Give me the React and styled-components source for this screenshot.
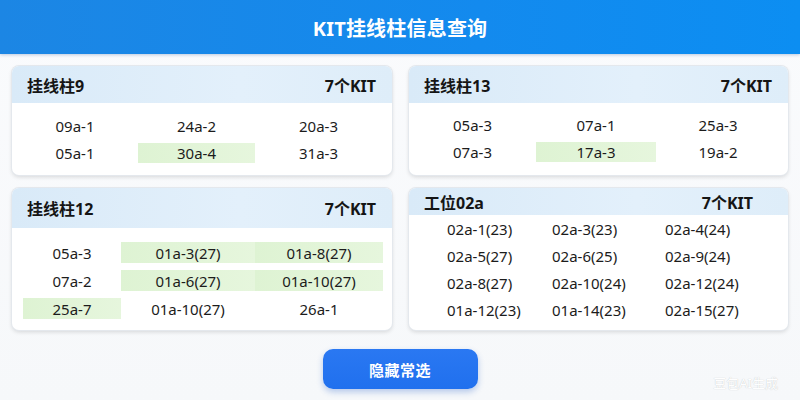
import React from 'react';
import styled, { createGlobalStyle } from 'styled-components';

const GlobalStyle = createGlobalStyle`
  html, body {
    margin: 0;
    padding: 0;
    background: #f7f9fb;
    font-family: "Noto Sans", "Noto Sans CJK SC", sans-serif;
    color: #1a1a1a;
  }
`;

const panels = [
  {
    title: '挂线柱9',
    count: '7个KIT',
    head: 37,
    right: 16,
    cols: '126px 117px 1fr',
    pad: '13px 10px 12px 0',
    rowH: 20,
    gap: 7,
    align: 'center',
    items: [
      ['09a-1'], ['24a-2'], ['20a-3'],
      ['05a-1'], ['30a-4', true], ['31a-3'],
    ],
  },
  {
    title: '挂线柱13',
    count: '7个KIT',
    head: 37,
    right: 16,
    cols: '127px 120px 1fr',
    pad: '12px 8px 13px 0',
    rowH: 20,
    gap: 7,
    align: 'center',
    items: [
      ['05a-3'], ['07a-1'], ['25a-3'],
      ['07a-3'], ['17a-3', true], ['19a-2'],
    ],
  },
  {
    title: '挂线柱12',
    count: '7个KIT',
    head: 40,
    right: 16,
    cols: '98px 134px 128px',
    pad: '14px 9px 11px 11px',
    rowH: 21,
    gap: 7,
    align: 'center',
    items: [
      ['05a-3'], ['01a-3(27)', true], ['01a-8(27)', true],
      ['07a-2'], ['01a-6(27)', true], ['01a-10(27)', true],
      ['25a-7', true], ['01a-10(27)'], ['26a-1'],
    ],
  },
  {
    title: '工位02a',
    count: '7个KIT',
    head: 27,
    right: 35,
    cols: '105px 113px 1fr',
    pad: '3px 0 8px 38px',
    rowH: 21,
    gap: 6,
    align: 'left',
    items: [
      ['02a-1(23)'], ['02a-3(23)'], ['02a-4(24)'],
      ['02a-5(27)'], ['02a-6(25)'], ['02a-9(24)'],
      ['02a-8(27)'], ['02a-10(24)'], ['02a-12(24)'],
      ['01a-12(23)'], ['01a-14(23)'], ['02a-15(27)'],
    ],
  },
];

const App = () => {
  return (
    <Page>
      <GlobalStyle />
      <TopBar>KIT挂线柱信息查询</TopBar>
      <Grid>
        {panels.map((p, i) => (
          <Card key={i}>
            <CardHead $h={p.head} $right={p.right}>
              <span>{p.title}</span>
              <span>{p.count}</span>
            </CardHead>
            <CardBody $cols={p.cols} $pad={p.pad} $gap={p.gap}>
              {p.items.map(([text, on], j) => (
                <Cell key={j} $on={on} $h={p.rowH} $align={p.align}>
                  {text}
                </Cell>
              ))}
            </CardBody>
          </Card>
        ))}
      </Grid>
      <Footer>
        <HideButton>隐藏常选</HideButton>
      </Footer>
      <Mark>豆包AI生成</Mark>
    </Page>
  );
};

const Page = styled.div`
  position: relative;
  width: 800px;
  height: 400px;
  overflow: hidden;
  background: linear-gradient(180deg, #fafbfd 0%, #f6f8fa 100%);
`;

const TopBar = styled.div`
  height: 54px;
  display: flex;
  align-items: center;
  justify-content: center;
  background: linear-gradient(90deg, #1c86e4 0%, #138aee 60%, #0c8ef2 100%);
  color: #fff;
  font-size: 20px;
  font-weight: 700;
  letter-spacing: 0.2px;
  box-shadow: 0 1px 3px rgba(0, 60, 140, 0.25);
`;

const Grid = styled.div`
  display: grid;
  grid-template-columns: 380px 379px;
  column-gap: 17px;
  row-gap: 13px;
  padding: 12px 11px 0 12px;
  align-items: stretch;
`;

const Card = styled.div`
  background: #fff;
  border-radius: 7px;
  overflow: hidden;
  box-shadow: 0 0 0 1px #e4e8ed, 0 2px 4px rgba(0, 0, 0, 0.14);
`;

const CardHead = styled.div`
  height: ${p => p.$h}px;
  display: flex;
  align-items: center;
  justify-content: space-between;
  padding: 0 ${p => p.$right}px 0 15px;
  background: linear-gradient(90deg, #d9eaf8 0%, #e3f0fb 60%, #deedf9 100%);
  font-size: 16px;
  font-weight: 700;
  color: #151515;
`;

const CardBody = styled.div`
  display: grid;
  grid-template-columns: ${p => p.$cols};
  row-gap: ${p => p.$gap}px;
  padding: ${p => p.$pad};
`;

const Cell = styled.div`
  height: ${p => p.$h}px;
  display: flex;
  align-items: center;
  justify-content: ${p => (p.$align === 'left' ? 'flex-start' : 'center')};
  font-size: 15px;
  color: #1c1c1c;
  white-space: nowrap;
  background: ${p => (p.$on ? 'linear-gradient(90deg, #def3d3, #e6f6dd)' : 'transparent')};
`;

const Footer = styled.div`
  display: flex;
  justify-content: center;
  padding-top: 19px;
`;

const HideButton = styled.button`
  width: 155px;
  height: 40px;
  border: none;
  border-radius: 10px;
  background: linear-gradient(180deg, #2a78f2 0%, #2070ee 100%);
  color: #fff;
  font-family: "Noto Sans", "Noto Sans CJK SC", sans-serif;
  font-size: 15px;
  font-weight: 700;
  letter-spacing: 0.5px;
  box-shadow: 0 3px 6px rgba(30, 90, 200, 0.3);
  cursor: pointer;
`;

const Mark = styled.div`
  position: absolute;
  right: 22px;
  bottom: 8px;
  font-size: 13px;
  color: #fff;
  text-shadow: 0 0 1px rgba(0, 0, 0, 0.25);
  opacity: 0.9;
`;

export default App;
